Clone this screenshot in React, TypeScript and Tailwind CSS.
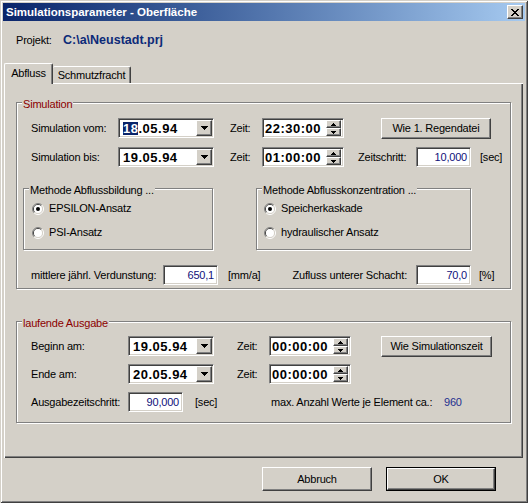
import React from "react";

const sunkenBase =
  "border border-t-[#808080] border-l-[#808080] border-b-white border-r-white shadow-[inset_1px_1px_0_#404040,inset_-1px_-1px_0_#d4d0c8] bg-white";
const raised =
  "bg-[#d4d0c8] border border-t-white border-l-white border-b-[#404040] border-r-[#404040] shadow-[inset_-1px_-1px_0_#808080]";

function DownArrow() {
  return (
    <svg width="7" height="4" viewBox="0 0 7 4" shapeRendering="crispEdges">
      <path d="M0 0h7v1h-1v1h-1v1h-1v1h-1v-1h-1v-1h-1v-1h-1z" fill="#000" />
    </svg>
  );
}

function SpinUp() {
  return (
    <svg width="5" height="3" viewBox="0 0 5 3" shapeRendering="crispEdges">
      <path d="M2 0h1v1h1v1h1v1h-5v-1h1v-1h1z" fill="#000" />
    </svg>
  );
}

function SpinDown() {
  return (
    <svg width="5" height="3" viewBox="0 0 5 3" shapeRendering="crispEdges">
      <path d="M0 0h5v1h-1v1h-1v1h-1v-1h-1v-1h-1z" fill="#000" />
    </svg>
  );
}

function CloseX() {
  return (
    <svg width="8" height="7" viewBox="0 0 8 7" shapeRendering="crispEdges">
      <path
        d="M0 0h2v1h-2z M6 0h2v1h-2z M1 1h2v1h-2z M5 1h2v1h-2z M2 2h4v1h-4z M3 3h2v1h-2z M2 4h4v1h-4z M1 5h2v1h-2z M5 5h2v1h-2z M0 6h2v1h-2z M6 6h2v1h-2z"
        fill="#000"
      />
    </svg>
  );
}

function Radio({ checked }: { checked?: boolean }) {
  return (
    <svg width="12" height="12" viewBox="0 0 12 12">
      <defs>
        <linearGradient id="rOuter" x1="0" y1="0" x2="1" y2="1">
          <stop offset="0.5" stopColor="#808080" />
          <stop offset="0.5" stopColor="#ffffff" />
        </linearGradient>
        <linearGradient id="rInner" x1="0" y1="0" x2="1" y2="1">
          <stop offset="0.5" stopColor="#404040" />
          <stop offset="0.5" stopColor="#d4d0c8" />
        </linearGradient>
      </defs>
      <circle cx="6" cy="6" r="5.5" fill="none" stroke="url(#rOuter)" strokeWidth="1" />
      <circle cx="6" cy="6" r="4.5" fill="none" stroke="url(#rInner)" strokeWidth="1" />
      <circle cx="6" cy="6" r="4" fill="#fff" />
      {checked && <circle cx="6" cy="6" r="2" fill="#000" />}
    </svg>
  );
}

function Btn({ className, children }: { className: string; children: React.ReactNode }) {
  return <div className={`${raised} flex items-center justify-center ${className}`}>{children}</div>;
}

function Combo({ w, children }: { w: string; children: React.ReactNode }) {
  return (
    <div className={`${sunkenBase} p-px ${w} h-[20px] flex`}>
      <div className="flex-1 flex items-center pl-[3px] text-[13px] font-bold tracking-[0.5px]">{children}</div>
      <div className={`${raised} w-[16px] flex items-center justify-center`}>
        <DownArrow />
      </div>
    </div>
  );
}

function TimeBox({ value }: { value: string }) {
  return (
    <div className={`${sunkenBase} p-px w-[82px] h-[20px] flex`}>
      <div className="flex-1 flex items-center pl-px text-[13px] font-bold tracking-[0.5px]">{value}</div>
      <div className="w-[15px] flex flex-col mr-px">
        <div className={`${raised} flex-1 flex items-center justify-center`}>
          <SpinUp />
        </div>
        <div className={`${raised} flex-1 flex items-center justify-center`}>
          <SpinDown />
        </div>
      </div>
    </div>
  );
}

function NumBox({ value }: { value: string }) {
  return (
    <div className={`${sunkenBase} w-[55px] h-[20px] flex items-center justify-end pr-[3px] text-[#10107a]`}>
      {value}
    </div>
  );
}

function Group({
  label,
  red,
  className,
  children,
}: {
  label: string;
  red?: boolean;
  className: string;
  children: React.ReactNode;
}) {
  return (
    <div className={`relative border border-[#808080] shadow-[inset_1px_1px_0_#fff,1px_1px_0_#fff] ${className}`}>
      <span
        className={`absolute top-[-5px] left-[5px] bg-[#d4d0c8] px-px leading-[13px] ${
          red ? "text-[#8c0000]" : "text-black"
        }`}
      >
        {label}
      </span>
      {children}
    </div>
  );
}

export default function App() {
  return (
    <div className="w-[528px] h-[503px] bg-[#d4d0c8] font-['Liberation_Sans',Arial,sans-serif] text-[11px] leading-[13px] text-black tracking-[-0.2px] p-[3px] shadow-[inset_1px_1px_0_#d4d0c8,inset_-1px_-1px_0_#404040,inset_2px_2px_0_#fff,inset_-2px_-2px_0_#808080] flex flex-col">
      {/* Title bar */}
      <div className="h-[18px] flex items-center justify-between bg-linear-to-r from-[#0a246a] to-[#a6caf0] pl-[3px] pr-[2px]">
        <span className="text-white font-bold text-[11.5px] tracking-normal pt-px">Simulationsparameter - Oberfläche</span>
        <div className={`${raised} w-[16px] h-[14px] flex items-center justify-center`}>
          <CloseX />
        </div>
      </div>

      {/* Projekt */}
      <div className="mt-[12px] h-[14px] flex items-center pl-[13px]">
        <span className="w-[47px]">Projekt:</span>
        <span className="font-bold text-[12.5px] text-[#0c2a78] tracking-normal">{"C:\\a\\Neustadt.prj"}</span>
      </div>

      {/* Tabs */}
      <div className="mt-[16px] ml-px h-[20px] flex items-end relative z-10">
        <div className="h-[21px] -mb-px w-[49px] bg-[#d4d0c8] border-t border-l border-t-white border-l-white border-r border-r-[#404040] shadow-[inset_-1px_0_0_#808080] rounded-t-[2px] flex items-center justify-center pb-px">
          Abfluss
        </div>
        <div className="h-[17px] w-[78px] bg-[#d4d0c8] border-t border-t-white border-r border-r-[#404040] shadow-[inset_-1px_0_0_#808080] rounded-t-[2px] flex items-center justify-center">
          Schmutzfracht
        </div>
      </div>

      {/* Panel */}
      <div className="ml-px w-[519px] h-[375px] shadow-[inset_1px_1px_0_#fff,inset_-1px_-1px_0_#404040,inset_-2px_-2px_0_#808080] pt-[19px] pl-[12px] flex flex-col">
        <Group label="Simulation" red className="w-[495px] h-[187px] pt-[15px] pl-[14px]">
          <div className="flex items-center h-[20px]">
            <span className="w-[87px]">Simulation vom:</span>
            <Combo w="w-[96px]">
              <span className="bg-[#0a246a] text-white inline-block leading-[13px]">18</span>.05.94
            </Combo>
            <span className="ml-[16px] w-[32px]">Zeit:</span>
            <TimeBox value="22:30:00" />
            <Btn className="ml-[37px] w-[110px] h-[21px]">Wie 1. Regendatei</Btn>
          </div>
          <div className="mt-[9px] flex items-center h-[20px]">
            <span className="w-[87px]">Simulation bis:</span>
            <Combo w="w-[96px]">19.05.94</Combo>
            <span className="ml-[16px] w-[32px]">Zeit:</span>
            <TimeBox value="01:00:00" />
            <span className="ml-[14px] w-[58px]">Zeitschritt:</span>
            <NumBox value="10,000" />
            <span className="ml-[9px]">[sec]</span>
          </div>

          <div className="mt-[21px] -ml-[8px] flex">
            <Group label="Methode Abflussbildung ..." className="w-[190px] h-[62px] pt-[13px] pl-[8px]">
              <div className="h-[13px] flex items-center gap-[5px]">
                <Radio checked />
                <span>EPSILON-Ansatz</span>
              </div>
              <div className="mt-[11px] h-[13px] flex items-center gap-[5px]">
                <Radio />
                <span>PSI-Ansatz</span>
              </div>
            </Group>
            <Group label="Methode Abflusskonzentration ..." className="ml-[43px] w-[215px] h-[62px] pt-[13px] pl-[7px]">
              <div className="h-[13px] flex items-center gap-[5px]">
                <Radio checked />
                <span>Speicherkaskade</span>
              </div>
              <div className="mt-[11px] h-[13px] flex items-center gap-[5px]">
                <Radio />
                <span>hydraulischer Ansatz</span>
              </div>
            </Group>
          </div>

          <div className="mt-[15px] flex items-center h-[20px]">
            <span className="w-[132px]">mittlere jährl. Verdunstung:</span>
            <NumBox value="650,1" />
            <span className="ml-[10px] w-[62px]">[mm/a]</span>
            <span className="w-[126px] text-right pr-[9px]">Zufluss unterer Schacht:</span>
            <NumBox value="70,0" />
            <span className="ml-[8px]">[%]</span>
          </div>
        </Group>

        <Group label="laufende Ausgabe" red className="mt-[32px] w-[495px] h-[102px] pt-[14px] pl-[14px]">
          <div className="flex items-center h-[20px]">
            <span className="w-[97px]">Beginn am:</span>
            <Combo w="w-[86px]">19.05.94</Combo>
            <span className="ml-[23px] w-[32px]">Zeit:</span>
            <TimeBox value="00:00:00" />
            <Btn className="ml-[30px] w-[111px] h-[21px]">Wie Simulationszeit</Btn>
          </div>
          <div className="mt-[8px] flex items-center h-[20px]">
            <span className="w-[97px]">Ende am:</span>
            <Combo w="w-[86px]">20.05.94</Combo>
            <span className="ml-[23px] w-[32px]">Zeit:</span>
            <TimeBox value="00:00:00" />
          </div>
          <div className="mt-[8px] flex items-center h-[20px]">
            <span className="w-[97px]">Ausgabezeitschritt:</span>
            <NumBox value="90,000" />
            <span className="ml-[12px] w-[76px]">[sec]</span>
            <span className="w-[173px]">max. Anzahl Werte je Element ca.:</span>
            <span className="text-[#1f2f8f]">960</span>
          </div>
        </Group>
      </div>

      {/* Bottom buttons */}
      <div className="mt-[9px] flex justify-end gap-[14px] pr-[29px]">
        <Btn className="w-[110px] h-[24px]">Abbruch</Btn>
        <div className="border border-black w-[110px] h-[24px]">
          <Btn className="w-full h-full">OK</Btn>
        </div>
      </div>
    </div>
  );
}
